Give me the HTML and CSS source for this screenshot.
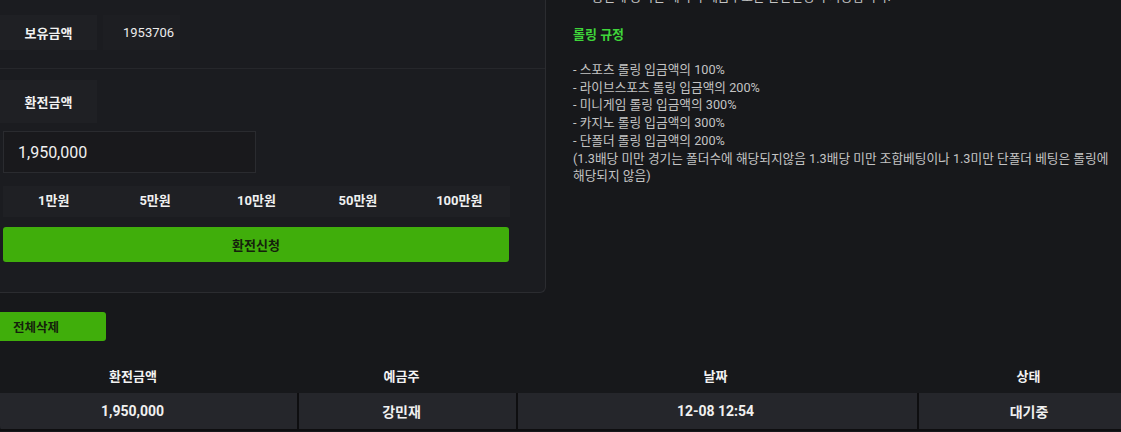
FILE: index.html
```html
<!DOCTYPE html>
<html lang="ko">
<head>
<meta charset="utf-8">
<link rel="stylesheet" href="styles.css">
</head>
<body>
<div class="top">
  <section class="panel">
    <div class="row-hold">
      <div class="label">보유금액</div>
      <div class="value">1953706</div>
    </div>
    <div class="row-amount">
      <div class="label label-tall">환전금액</div>
      <div class="input">1,950,000</div>
      <div class="quick">
        <span>1만원</span><span>5만원</span><span>10만원</span><span>50만원</span><span>100만원</span>
      </div>
      <button class="submit">환전신청</button>
    </div>
  </section>
  <aside class="rules">
    <p class="note">- 충전에 동의한 계좌의 예금주로만 환전신청이 가능합니다.</p>
    <h3 class="rules-title">롤링 규정</h3>
    <p class="rules-list">- 스포츠 롤링 입금액의 100%<br>- 라이브스포츠 롤링 입금액의 200%<br>- 미니게임 롤링 입금액의 300%<br>- 카지노 롤링 입금액의 300%<br>- 단폴더 롤링 입금액의 200%<br>(1.3배당 미만 경기는 폴더수에 해당되지않음 1.3배당 미만 조합베팅이나 1.3미만 단폴더 베팅은 롤링에 해당되지 않음)</p>
  </aside>
</div>
<div class="actions"><button class="delete-all">전체삭제</button></div>
<table class="history">
  <colgroup><col class="c1"><col class="c2"><col class="c3"><col class="c4"></colgroup>
  <thead><tr><th class="k1">환전금액</th><th class="k2">예금주</th><th class="k3">날짜</th><th class="k4">상태</th></tr></thead>
  <tbody><tr><td class="k1">1,950,000</td><td class="k2">강민재</td><td class="k3">12-08 12:54</td><td class="k4">대기중</td></tr></tbody>
</table>
</body>
</html>
```
FILE: styles.css
```css
* { box-sizing: border-box; }
html, body { margin: 0; padding: 0; }
body {
  background: #17181b;
  color: #e6e6e6;
  font-family: Roboto, "Noto Sans CJK KR", sans-serif;
  width: 1121px;
  height: 432px;
  overflow: hidden;
}
.top {
  display: flex;
  margin-top: -12px;
}
.panel {
  width: 546px;
  flex: none;
  background: #1b1c20;
  border-right: 1px solid #2b2c30;
  border-bottom: 1px solid #2b2c30;
  border-bottom-right-radius: 6px;
}
.row-hold {
  display: flex;
  gap: 6px;
  padding: 27px 0 18px 0;
  border-bottom: 1px solid #26272b;
}
.label {
  width: 97px;
  height: 35px;
  background: #1f2024;
  display: flex;
  align-items: center;
  justify-content: center;
  font-size: 13px;
  font-weight: 700;
  color: #f2f2f2;
}
.value {
  width: 77px;
  height: 35px;
  background: #1d1e22;
  display: flex;
  align-items: center;
  padding-left: 20px;
  font-size: 13px;
  color: #ececec;
}
.row-amount {
  padding: 11px 0 30px 3px;
}
.label-tall {
  height: 43px;
  margin-left: -3px;
}
.input {
  margin-top: 8px;
  width: 253px;
  height: 42px;
  border: 1px solid #2a2b2f;
  background: #19191c;
  display: flex;
  align-items: center;
  padding-left: 14px;
  font-size: 16px;
  color: #f0f0f0;
}
.quick {
  margin-top: 13px;
  width: 507px;
  height: 31px;
  background: #1f2024;
  display: grid;
  grid-template-columns: repeat(5, 1fr);
  align-items: center;
  justify-items: center;
  padding-bottom: 4px;
  font-size: 13px;
  font-weight: 700;
  color: #f0f0f0;
}
.submit {
  display: block;
  margin-top: 10px;
  width: 506px;
  height: 35px;
  background: #40ae0b;
  border: none;
  border-radius: 3px;
  font-family: inherit;
  font-size: 13px;
  font-weight: 700;
  color: #14210c;
}
.rules {
  padding-left: 27px;
  font-size: 12.7px;
  color: #c4c4c4;
  word-break: keep-all;
}
.note {
  margin: 0;
  padding-left: 12px;
  line-height: 18px;
}
.rules-title {
  margin: 20px 0 0 0;
  font-size: 13px;
  font-weight: 700;
  color: #3fd53a;
  line-height: 18px;
}
.rules-list {
  margin: 17px 0 0 0;
  line-height: 17.7px;
}
.actions {
  margin-top: 19px;
}
.delete-all {
  width: 106px;
  height: 29px;
  background: #40ae0b;
  border: none;
  border-radius: 0 3px 3px 0;
  text-align: left;
  padding-left: 13px;
  font-family: inherit;
  font-size: 12.5px;
  font-weight: 700;
  color: #14210c;
}
.history {
  margin-top: 20px;
  width: 1121px;
  border-collapse: collapse;
  table-layout: fixed;
}
.c1 { width: 298px; }
.c2 { width: 219px; }
.c3 { width: 401px; }
.c4 { width: 203px; }
.history th {
  height: 32px;
  font-size: 13px;
  font-weight: 700;
  color: #f2f2f2;
  text-align: center;
  padding: 0 0 4px 0;
}
.history td {
  height: 37px;
  background: #25262b;
  font-size: 14px;
  font-weight: 700;
  color: #f0f0f0;
  text-align: center;
  padding: 0;
  border-left: 2px solid #0e0e10;
  border-bottom: 2px solid #0e0e10;
}
.history td:first-child { border-left: none; border-bottom-left-radius: 4px; }
.history .k1 { padding-right: 32px; }
.history .k2 { padding-right: 12px; }
.history .k3 { padding-right: 4px; }
.history .k4 { padding-left: 18px; }
```
